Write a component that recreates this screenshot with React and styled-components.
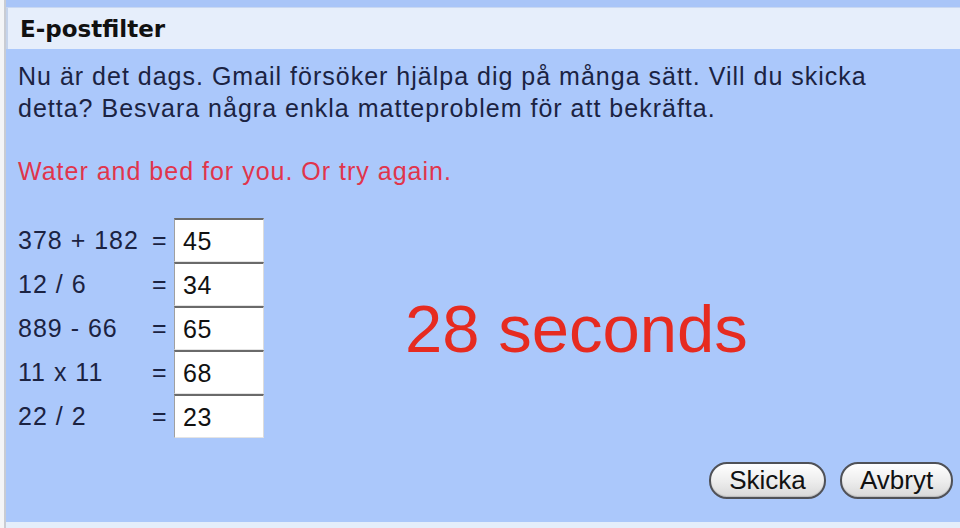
import styled, { createGlobalStyle } from "styled-components";

const GlobalStyle = createGlobalStyle`
  html, body {
    margin: 0;
    padding: 0;
    background: #f2f4f7;
  }
  body {
    font-family: "Liberation Sans", Arial, sans-serif;
  }
`;

const Page = styled.div`
  display: flex;
  width: 960px;
  height: 528px;
  overflow: hidden;
`;

const Gutter = styled.div`
  width: 4px;
  flex: none;
  background: #f4f5f7;
  border-right: 2px solid #c9ccd3;
`;

const Dialog = styled.div`
  flex: 1;
  display: flex;
  flex-direction: column;
  background: #a9c5f8;
  padding-top: 7px;
  border-bottom: 6px solid #e4eefb;
`;

const Header = styled.div`
  height: 41px;
  display: flex;
  align-items: center;
  padding-left: 12px;
  background: #e6eefb;
  border-top: 1px solid #c9d8f2;
  border-left: 2px solid #c5d3ea;
  font-family: "DejaVu Sans", Verdana, sans-serif;
  font-weight: bold;
  font-size: 23px;
  color: #111;
`;

const Body = styled.div`
  flex: 1;
  display: flex;
  flex-direction: column;
  padding: 11px 7px 0 12px;
  background: #abc8fb;
  color: #1b2342;
  font-size: 25px;
  line-height: 32px;
  letter-spacing: 1px;
`;

const Intro = styled.p`
  margin: 0;
  width: 910px;
`;

const Notice = styled.p`
  margin: 31px 0 0;
  color: #e0354c;
`;

const Main = styled.div`
  display: flex;
  align-items: center;
  margin-top: 31px;
`;

const Sums = styled.div`
  display: grid;
  grid-template-columns: 134px 22px 90px;
  align-items: center;
`;

const Expr = styled.span`
  white-space: nowrap;
`;

const Eq = styled.span`
  text-align: left;
`;

const Answer = styled.div`
  box-sizing: border-box;
  height: 44px;
  padding-left: 8px;
  display: flex;
  align-items: center;
  background: #fff;
  border-top: 2px solid #6a6a6a;
  border-left: 1px solid #a0a0a0;
  border-right: 1px solid #dcdcdc;
  border-bottom: 1px solid #e4e4e4;
  color: #111;
  letter-spacing: 0.5px;
`;

const Timer = styled.div`
  margin-left: 141px;
  color: #e62b20;
  font-size: 67px;
  line-height: 1;
  letter-spacing: 0;
`;

const Actions = styled.div`
  display: flex;
  justify-content: flex-end;
  gap: 14px;
  margin-top: 24px;
`;

const Button = styled.button`
  box-sizing: border-box;
  height: 37px;
  min-width: ${(p) => p.$w}px;
  padding: 0 14px;
  border: 2px solid #4f5157;
  border-radius: 18px;
  background: linear-gradient(#ffffff, #ececec 55%, #d8d8d8);
  box-shadow: inset 0 -1px 1px #bbb;
  font-family: "Liberation Sans", Arial, sans-serif;
  font-size: 26px;
  color: #111;
`;

const sums = [
  { expr: "378 + 182", answer: "45" },
  { expr: "12 / 6", answer: "34" },
  { expr: "889 - 66", answer: "65" },
  { expr: "11 x 11", answer: "68" },
  { expr: "22 / 2", answer: "23" },
];

export default function App() {
  return (
    <>
      <GlobalStyle />
      <Page>
        <Gutter />
        <Dialog>
          <Header>E-postfilter</Header>
          <Body>
            <Intro>
              Nu är det dags. Gmail försöker hjälpa dig på många sätt. Vill du
              skicka detta? Besvara några enkla matteproblem för att bekräfta.
            </Intro>
            <Notice>Water and bed for you. Or try again.</Notice>
            <Main>
              <Sums>
                {sums.map((s) => (
                  <>
                    <Expr key={s.expr}>{s.expr}</Expr>
                    <Eq>=</Eq>
                    <Answer>{s.answer}</Answer>
                  </>
                ))}
              </Sums>
              <Timer>28 seconds</Timer>
            </Main>
            <Actions>
              <Button $w={117}>Skicka</Button>
              <Button $w={113}>Avbryt</Button>
            </Actions>
          </Body>
        </Dialog>
      </Page>
    </>
  );
}
